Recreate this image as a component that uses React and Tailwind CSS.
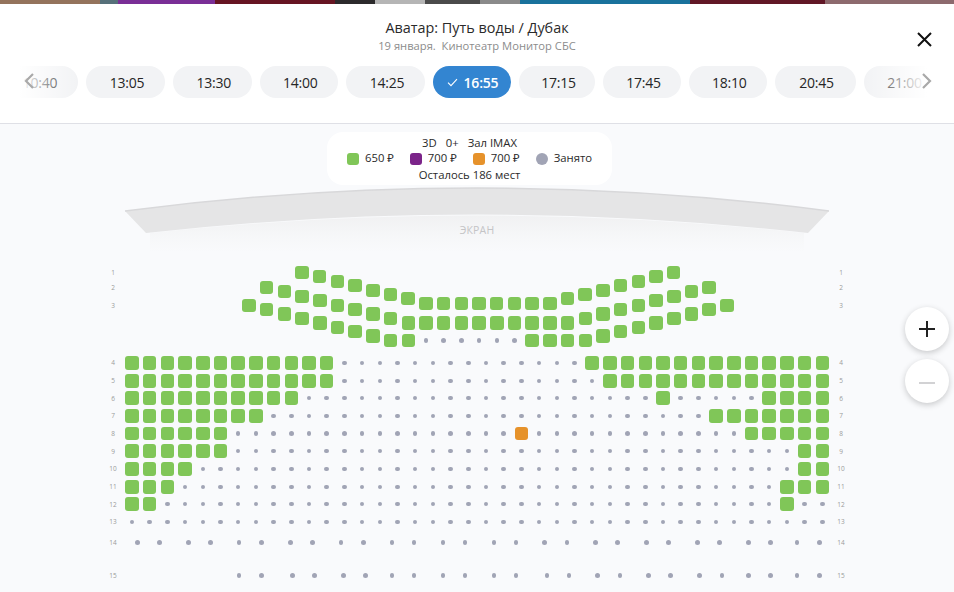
const font = { fontFamily: '"Open Sans", "Noto Sans", sans-serif' }

const PITCH = 17.7
const MAP_TOP = 256

const times = [
  { t: '10:40', w: 'w-[79px]' },
  { t: '13:05', w: 'w-[79px]' },
  { t: '13:30', w: 'w-[78.5px]' },
  { t: '14:00', w: 'w-[78.5px]' },
  { t: '14:25', w: 'w-[79px]' },
  { t: '16:55', w: 'w-[78px]', active: true },
  { t: '17:15', w: 'w-[76px]' },
  { t: '17:45', w: 'w-[78px]' },
  { t: '18:10', w: 'w-[77.5px]' },
  { t: '20:45', w: 'w-[81px]' },
  { t: '21:00', w: 'w-[79px]' },
]

const strip = [
  ['w-[100px]', 'bg-[#94735c]'],
  ['w-[18px]', 'bg-[#56707a]'],
  ['w-[97px]', 'bg-[#7a2e96]'],
  ['w-[120px]', 'bg-[#661522]'],
  ['w-[40px]', 'bg-[#2c2a2c]'],
  ['w-[50px]', 'bg-[#b5b5b5]'],
  ['w-[55px]', 'bg-[#4b4b4b]'],
  ['w-[40px]', 'bg-[#8a8a8a]'],
  ['w-[170px]', 'bg-[#19729c]'],
  ['w-[135px]', 'bg-[#611726]'],
  ['w-[129px]', 'bg-[#8d6a6e]'],
]

// curved balcony rows: y of every seat, mirrored around the middle
const row1Y = [272.7, 276.7, 281.3, 285.7, 290.3, 294.3, 298.7]
const row2Y = [287.7, 291.7, 296.3, 300.7, 305.3, 309.3, 314, 318.3]
const row3Y = [305.3, 309.3, 314, 318.3, 323, 327.3, 331.7, 336, 340.7]

function balcony() {
  const seats = []
  const add = (startX, slope, flat, flatCount, free) => {
    const ys = [...slope, ...Array(flatCount).fill(flat), ...[...slope].reverse()]
    ys.forEach((y, i) => {
      seats.push({ x: startX + i * 17.7, y, free: !free || !free(i) })
    })
  }
  add(302, row1Y, 303.3, 8)
  add(266.7, row2Y, 323, 10)
  add(249, row3Y, 340.7, 10, (i) => i >= 10 && i <= 15)
  return seats
}

// parter: y and the column ranges that are free, the rest is taken
const parter = [
  { y: 363, green: [[0, 11], [26, 39]] },
  { y: 381, green: [[0, 11], [27, 39]] },
  { y: 398, green: [[0, 9], [30, 30], [36, 39]] },
  { y: 416, green: [[0, 7], [33, 39]] },
  { y: 433.7, green: [[0, 5], [35, 39]], orange: 22 },
  { y: 451, green: [[0, 5], [38, 39]] },
  { y: 469, green: [[0, 3], [38, 39]] },
  { y: 487, green: [[0, 2], [37, 39]] },
  { y: 504, green: [[0, 1], [37, 37]] },
  { y: 522, green: [] },
]

const row14 = [137.7, 159.7, 188.3, 210.3, 239, 261.3, 290.3, 312.3, 341, 363.3, 392, 414, 443, 465, 494, 516, 544.7, 567, 595.3, 617.7, 646.7, 668.7, 697.7, 719.7, 748.3, 770.3, 797, 819.3]
const row15 = [239, 261.3, 292.3, 314.3, 343.3, 365.7, 392, 414, 443, 465, 494, 516, 547, 569, 597.7, 620, 648.7, 670.7, 699.7, 722, 748.3, 770.3, 797, 819.3]

function allSeats() {
  const list = []
  balcony().forEach((s) => list.push({ x: s.x, y: s.y, kind: s.free ? 'green' : 'dot' }))
  parter.forEach((r) => {
    for (let c = 0; c < 40; c++) {
      const isGreen = r.green.some(([a, b]) => c >= a && c <= b)
      const kind = r.orange === c ? 'orange' : isGreen ? 'green' : 'dot'
      list.push({ x: 132 + c * PITCH, y: r.y, kind })
    }
  })
  row14.forEach((x) => list.push({ x, y: 542.3, kind: 'dot' }))
  row15.forEach((x) => list.push({ x, y: 575.5, kind: 'dot' }))
  return list
}

const rowLabels = [272.7, 287.7, 305.5, 363, 381, 398.5, 416, 434, 451.5, 469, 487, 504.5, 522, 542.5, 575.5]

function Seat({ x, y, kind }) {
  if (kind === 'dot') {
    return (
      <div
        className="absolute w-[4.5px] h-[4.5px] rounded-full bg-[#a1a4b5]"
        style={{ left: x - 2.25, top: y - MAP_TOP - 2.25 }}
      />
    )
  }
  return (
    <div
      className={`absolute w-[13.5px] h-[13.5px] rounded-[3px] ${kind === 'orange' ? 'bg-[#e6922b]' : 'bg-[#80c658]'}`}
      style={{ left: x - 6.75, top: y - MAP_TOP - 6.75 }}
    />
  )
}

function TimeRow() {
  return (
    <div className="relative mt-[12px] h-[32px] overflow-hidden">
      <div className="flex gap-2 -ml-px">
        {times.map((item) => (
          <div
            key={item.t}
            className={`${item.w} shrink-0 h-[32px] rounded-full flex items-center justify-center text-[14px] tracking-[-0.2px] ${
              item.active ? 'bg-[#3385d1] text-white font-semibold gap-[6px] pl-px' : 'bg-[#f2f3f5] text-[#262626] pl-[3px]'
            }`}
          >
            {item.active && (
              <svg width="11" height="9" viewBox="0 0 11 9" fill="none">
                <path d="M1 4.6 L4 7.6 L10 1.2" stroke="white" strokeWidth="1.1" />
              </svg>
            )}
            <span>{item.t}</span>
          </div>
        ))}
      </div>
      <div className="absolute left-0 top-0 h-full w-[78px] bg-gradient-to-r from-white from-[25%] to-white/0" />
      <div className="absolute right-0 top-0 h-full w-[90px] bg-gradient-to-l from-white from-[30%] to-white/0" />
      <svg className="absolute left-[23px] top-[6px]" width="12" height="18" viewBox="0 0 12 18" fill="none">
        <path d="M10 2 L3 9 L10 16" stroke="#a9a9a9" strokeWidth="2.2" />
      </svg>
      <svg className="absolute left-[920px] top-[6px]" width="12" height="18" viewBox="0 0 12 18" fill="none">
        <path d="M3 2 L10 9 L3 16" stroke="#a9a9a9" strokeWidth="2.2" />
      </svg>
    </div>
  )
}

function Legend() {
  const items = [
    { label: '650 ₽', cls: 'bg-[#80c658] rounded-[3px]' },
    { label: '700 ₽', cls: 'bg-[#7b2489] rounded-[3px]' },
    { label: '700 ₽', cls: 'bg-[#e6922b] rounded-[3px]' },
    { label: 'Занято', cls: 'bg-[#a1a4b5] rounded-full' },
  ]
  return (
    <div className="ml-[327px] w-[285px] h-[53px] bg-white rounded-2xl flex flex-col items-center pt-[3px] text-[11.3px] leading-[16.5px] text-[#2a2a2a]">
      <div className="flex gap-[9px]">
        <span>3D</span>
        <span>0+</span>
        <span>Зал IMAX</span>
      </div>
      <div className="flex gap-4 items-center h-[14px] mb-px">
        {items.map((item, i) => (
          <div key={i} className="flex items-center gap-[6px]">
            <div className={`w-3 h-3 ${item.cls}`} />
            <span>{item.label}</span>
          </div>
        ))}
      </div>
      <div>Осталось 186 мест</div>
    </div>
  )
}

function Screen() {
  return (
    <div className="relative h-[70px]">
      <svg className="w-full h-full" viewBox="0 0 954 70" fill="none">
        <defs>
          <linearGradient id="glow" x1="0" y1="0" x2="0" y2="1">
            <stop offset="0" stopColor="#eeeeef" />
            <stop offset="0.55" stopColor="#f5f6f7" />
            <stop offset="1" stopColor="#f9fafc" />
          </linearGradient>
        </defs>
        <path d="M150 47 Q477 12 804 47 L804 66 L150 66 Z" fill="url(#glow)" opacity="0.75" />
        <path d="M125 25 Q477 -21 829 25 L808 47 Q477 10 146 47 Z" fill="#e5e5e6" />
        <path d="M125 25 Q477 -21 829 25" stroke="#d8d8da" strokeWidth="1.5" />
      </svg>
      <div className="absolute left-0 right-0 top-[37px] text-center text-[10.5px] tracking-[0.2px] text-[#c4c4c6]">ЭКРАН</div>
    </div>
  )
}

function ZoomButton({ children }) {
  return (
    <div className="w-11 h-11 rounded-full bg-white shadow-[0_2px_6px_rgba(0,0,0,0.2)] flex items-center justify-center">
      {children}
    </div>
  )
}

export default function App() {
  const seats = allSeats()
  return (
    <div className="relative w-[954px] h-[592px] overflow-hidden bg-[#f9fafc]" style={font}>
      <div className="flex h-1">
        {strip.map(([w, bg], i) => (
          <div key={i} className={`${w} ${bg}`} />
        ))}
      </div>

      <div className="relative h-[120px] bg-white border-b border-[#dfe0e6] pt-[14px]">
        <div className="text-center text-[14.4px] leading-[20px] text-[#2a2a2a]">Аватар: Путь воды / Дубак</div>
        <div className="text-center text-[11.2px] leading-[16px] text-[#8c8c8c] whitespace-pre">19 января.  Кинотеатр Монитор СБС</div>
        <TimeRow />
        <svg className="absolute left-[916px] top-[27px]" width="17" height="17" viewBox="0 0 17 17" fill="none">
          <path d="M2 2 L15 15 M15 2 L2 15" stroke="#111" strokeWidth="2" />
        </svg>
      </div>

      <div className="pt-2">
        <Legend />
        <div className="mt-px">
          <Screen />
        </div>
        <div className="relative h-[336px]">
          {seats.map((s, i) => (
            <Seat key={i} x={s.x} y={s.y} kind={s.kind} />
          ))}
          {rowLabels.map((y, i) => (
            <div key={i}>
              <span
                className="absolute w-4 -ml-2 text-center text-[6.5px] leading-[8px] text-[#9a9a9a]"
                style={{ left: 113, top: y - MAP_TOP - 4 }}
              >
                {i + 1}
              </span>
              <span
                className="absolute w-4 -ml-2 text-center text-[6.5px] leading-[8px] text-[#9a9a9a]"
                style={{ left: 841, top: y - MAP_TOP - 4 }}
              >
                {i + 1}
              </span>
            </div>
          ))}
        </div>
      </div>

      <div className="absolute left-[905px] top-[307px] flex flex-col gap-2">
        <ZoomButton>
          <svg width="18" height="18" viewBox="0 0 18 18" fill="none">
            <path d="M9 1 V17 M1 9 H17" stroke="#222" strokeWidth="2" />
          </svg>
        </ZoomButton>
        <ZoomButton>
          <svg width="18" height="18" viewBox="0 0 18 18" fill="none">
            <path d="M1 11 H17" stroke="#d2d2d4" strokeWidth="2" />
          </svg>
        </ZoomButton>
      </div>
    </div>
  )
}
